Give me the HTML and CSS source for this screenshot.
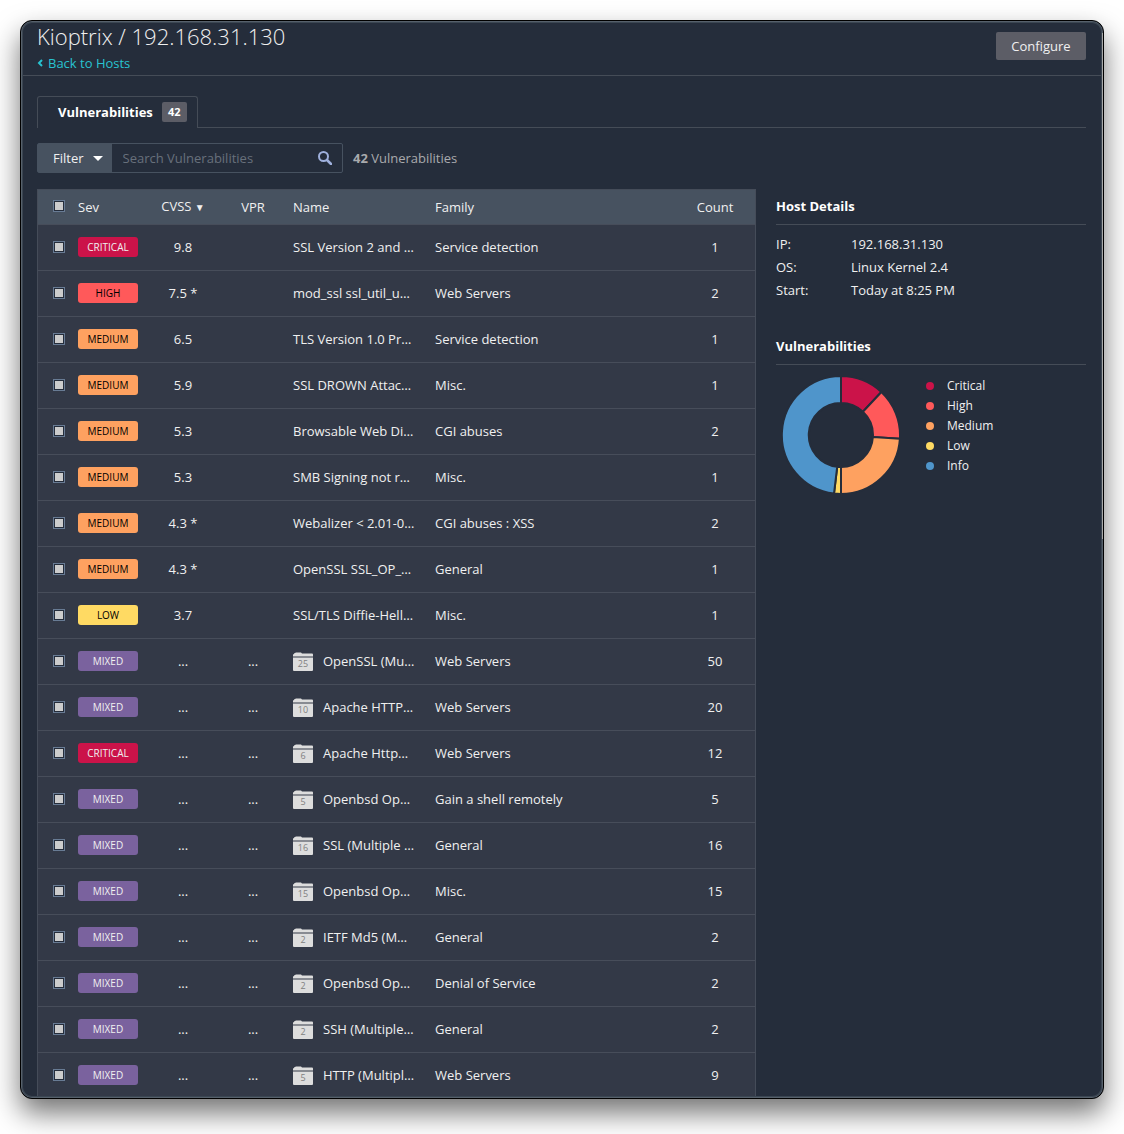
FILE: index.html
```html
<!DOCTYPE html>
<html lang="en">
<head>
<meta charset="utf-8">
<meta name="viewport" content="width=device-width, initial-scale=1">
<title>Kioptrix / 192.168.31.130</title>
<link rel="stylesheet" href="styles.css">
</head>
<body>
<svg class="defs" width="0" height="0" aria-hidden="true">
  <symbol id="folder" viewBox="0 0 20 20">
    <path fill="#ddd" d="M0 4.500V3q0-1 1-1V1.500L3 .5h5l1 1h10q1 0 1 1v2zM0 5.500h20V18q0 1-1 1H1q-1 0-1-1z"/>
  </symbol>
</svg>
<div class="window">
  <header class="header">
    <div>
      <h1 class="title">Kioptrix / 192.168.31.130</h1>
      <a class="back" href="#"><svg width="6" height="8" viewBox="0 0 6 8" aria-hidden="true"><path d="M5 1 2 4l3 3" fill="none" stroke="currentColor" stroke-width="2"/></svg>Back to Hosts</a>
    </div>
    <button class="configure" type="button">Configure</button>
  </header>
  <main class="content">
    <nav class="tabs">
      <a class="tab" href="#">Vulnerabilities <span class="tab-count">42</span></a>
    </nav>
    <div class="toolbar">
      <div class="search">
        <button class="filter" type="button">Filter <span class="caret"></span></button>
        <input class="search-input" type="text" placeholder="Search Vulnerabilities" aria-label="Search Vulnerabilities">
        <svg class="search-icon" width="14" height="14" viewBox="0 0 14 14" aria-hidden="true"><circle cx="5.500" cy="5.500" r="4.500" fill="none" stroke="#9fb0dc" stroke-width="2"/><path d="m9 9 4 4" stroke="#9fb0dc" stroke-width="2.500" stroke-linecap="round"/></svg>
      </div>
      <div class="total"><b>42</b> Vulnerabilities</div>
    </div>
    <div class="columns">
      <table class="vulns">
        <colgroup><col class="c-check"><col class="c-sev"><col class="c-cvss"><col class="c-vpr"><col class="c-name"><col><col class="c-count"></colgroup>
        <thead>
          <tr><th><input class="check" type="checkbox" aria-label="Select all"></th><th>Sev</th><th class="mid sorted">CVSS <span class="sort">▼</span></th><th class="mid">VPR</th><th>Name</th><th>Family</th><th class="mid">Count</th></tr>
        </thead>
        <tbody>
          <tr><td><input class="check" type="checkbox" aria-label="Select row"></td><td><span class="sev critical">CRITICAL</span></td><td class="mid">9.8</td><td class="mid"></td><td>SSL Version 2 and …</td><td>Service detection</td><td class="mid">1</td></tr>
          <tr><td><input class="check" type="checkbox" aria-label="Select row"></td><td><span class="sev high">HIGH</span></td><td class="mid">7.5 *</td><td class="mid"></td><td>mod_ssl ssl_util_u…</td><td>Web Servers</td><td class="mid">2</td></tr>
          <tr><td><input class="check" type="checkbox" aria-label="Select row"></td><td><span class="sev medium">MEDIUM</span></td><td class="mid">6.5</td><td class="mid"></td><td>TLS Version 1.0 Pr…</td><td>Service detection</td><td class="mid">1</td></tr>
          <tr><td><input class="check" type="checkbox" aria-label="Select row"></td><td><span class="sev medium">MEDIUM</span></td><td class="mid">5.9</td><td class="mid"></td><td>SSL DROWN Attac…</td><td>Misc.</td><td class="mid">1</td></tr>
          <tr><td><input class="check" type="checkbox" aria-label="Select row"></td><td><span class="sev medium">MEDIUM</span></td><td class="mid">5.3</td><td class="mid"></td><td>Browsable Web Di…</td><td>CGI abuses</td><td class="mid">2</td></tr>
          <tr><td><input class="check" type="checkbox" aria-label="Select row"></td><td><span class="sev medium">MEDIUM</span></td><td class="mid">5.3</td><td class="mid"></td><td>SMB Signing not r…</td><td>Misc.</td><td class="mid">1</td></tr>
          <tr><td><input class="check" type="checkbox" aria-label="Select row"></td><td><span class="sev medium">MEDIUM</span></td><td class="mid">4.3 *</td><td class="mid"></td><td>Webalizer &lt; 2.01-0…</td><td>CGI abuses : XSS</td><td class="mid">2</td></tr>
          <tr><td><input class="check" type="checkbox" aria-label="Select row"></td><td><span class="sev medium">MEDIUM</span></td><td class="mid">4.3 *</td><td class="mid"></td><td>OpenSSL SSL_OP_…</td><td>General</td><td class="mid">1</td></tr>
          <tr><td><input class="check" type="checkbox" aria-label="Select row"></td><td><span class="sev low">LOW</span></td><td class="mid">3.7</td><td class="mid"></td><td>SSL/TLS Diffie-Hell…</td><td>Misc.</td><td class="mid">1</td></tr>
          <tr><td><input class="check" type="checkbox" aria-label="Select row"></td><td><span class="sev mixed">MIXED</span></td><td class="mid">...</td><td class="mid">...</td><td><div class="group"><span class="folder"><svg width="20" height="20" aria-hidden="true"><use href="#folder"/></svg><span class="folder-num">25</span></span>OpenSSL (Mu…</div></td><td>Web Servers</td><td class="mid">50</td></tr>
          <tr><td><input class="check" type="checkbox" aria-label="Select row"></td><td><span class="sev mixed">MIXED</span></td><td class="mid">...</td><td class="mid">...</td><td><div class="group"><span class="folder"><svg width="20" height="20" aria-hidden="true"><use href="#folder"/></svg><span class="folder-num">10</span></span>Apache HTTP…</div></td><td>Web Servers</td><td class="mid">20</td></tr>
          <tr><td><input class="check" type="checkbox" aria-label="Select row"></td><td><span class="sev critical">CRITICAL</span></td><td class="mid">...</td><td class="mid">...</td><td><div class="group"><span class="folder"><svg width="20" height="20" aria-hidden="true"><use href="#folder"/></svg><span class="folder-num">6</span></span>Apache Http…</div></td><td>Web Servers</td><td class="mid">12</td></tr>
          <tr><td><input class="check" type="checkbox" aria-label="Select row"></td><td><span class="sev mixed">MIXED</span></td><td class="mid">...</td><td class="mid">...</td><td><div class="group"><span class="folder"><svg width="20" height="20" aria-hidden="true"><use href="#folder"/></svg><span class="folder-num">5</span></span>Openbsd Op…</div></td><td>Gain a shell remotely</td><td class="mid">5</td></tr>
          <tr><td><input class="check" type="checkbox" aria-label="Select row"></td><td><span class="sev mixed">MIXED</span></td><td class="mid">...</td><td class="mid">...</td><td><div class="group"><span class="folder"><svg width="20" height="20" aria-hidden="true"><use href="#folder"/></svg><span class="folder-num">16</span></span>SSL (Multiple …</div></td><td>General</td><td class="mid">16</td></tr>
          <tr><td><input class="check" type="checkbox" aria-label="Select row"></td><td><span class="sev mixed">MIXED</span></td><td class="mid">...</td><td class="mid">...</td><td><div class="group"><span class="folder"><svg width="20" height="20" aria-hidden="true"><use href="#folder"/></svg><span class="folder-num">15</span></span>Openbsd Op…</div></td><td>Misc.</td><td class="mid">15</td></tr>
          <tr><td><input class="check" type="checkbox" aria-label="Select row"></td><td><span class="sev mixed">MIXED</span></td><td class="mid">...</td><td class="mid">...</td><td><div class="group"><span class="folder"><svg width="20" height="20" aria-hidden="true"><use href="#folder"/></svg><span class="folder-num">2</span></span>IETF Md5 (M…</div></td><td>General</td><td class="mid">2</td></tr>
          <tr><td><input class="check" type="checkbox" aria-label="Select row"></td><td><span class="sev mixed">MIXED</span></td><td class="mid">...</td><td class="mid">...</td><td><div class="group"><span class="folder"><svg width="20" height="20" aria-hidden="true"><use href="#folder"/></svg><span class="folder-num">2</span></span>Openbsd Op…</div></td><td>Denial of Service</td><td class="mid">2</td></tr>
          <tr><td><input class="check" type="checkbox" aria-label="Select row"></td><td><span class="sev mixed">MIXED</span></td><td class="mid">...</td><td class="mid">...</td><td><div class="group"><span class="folder"><svg width="20" height="20" aria-hidden="true"><use href="#folder"/></svg><span class="folder-num">2</span></span>SSH (Multiple…</div></td><td>General</td><td class="mid">2</td></tr>
          <tr><td><input class="check" type="checkbox" aria-label="Select row"></td><td><span class="sev mixed">MIXED</span></td><td class="mid">...</td><td class="mid">...</td><td><div class="group"><span class="folder"><svg width="20" height="20" aria-hidden="true"><use href="#folder"/></svg><span class="folder-num">5</span></span>HTTP (Multipl…</div></td><td>Web Servers</td><td class="mid">9</td></tr>
        </tbody>
      </table>
      <aside class="side">
        <h2 class="side-title">Host Details</h2>
        <dl class="details">
          <dt>IP:</dt><dd>192.168.31.130</dd>
          <dt>OS:</dt><dd>Linux Kernel 2.4</dd>
          <dt>Start:</dt><dd>Today at 8:25 PM</dd>
        </dl>
        <h2 class="side-title">Vulnerabilities</h2>
        <div class="chart">
          <svg width="118" height="118" viewBox="-59 -59 118 118" role="img" aria-label="Vulnerabilities by severity">
            <g stroke="#252d3b" stroke-width="2">
              <path fill="#cb1349" d="M0-59A59 59 0 0 1 40.400-43L21.900-23.300A32 32 0 0 0 0-32z"/>
              <path fill="#ff595a" d="M40.400-43A59 59 0 0 1 58.900 3.700L31.900 2A32 32 0 0 0 21.900-23.300z"/>
              <path fill="#fea160" d="M58.900 3.700A59 59 0 0 1 0 59V32A32 32 0 0 0 31.900 2z"/>
              <path fill="#ffda63" d="M0 59A59 59 0 0 1-7 58.600L-3.800 31.800A32 32 0 0 0 0 32z"/>
              <path fill="#4f95cb" d="M-7 58.600A59 59 0 0 1 0-59V-32A32 32 0 0 0-3.800 31.800z"/>
            </g>
          </svg>
          <ul class="legend">
            <li><span class="dot critical"></span>Critical</li>
            <li><span class="dot high"></span>High</li>
            <li><span class="dot medium"></span>Medium</li>
            <li><span class="dot low"></span>Low</li>
            <li><span class="dot info"></span>Info</li>
          </ul>
        </div>
      </aside>
    </div>
  </main>
  <div class="scroll-thumb"></div>
</div>
</body>
</html>
```
FILE: styles.css
```css
* { box-sizing: border-box; }

body {
  margin: 0;
  padding: 20px 20px 35px;
  height: 100vh;
  overflow: hidden;
  background: #fff;
  color: #f0f0f0;
  font: 13px/20px "Open Sans", sans-serif;
}

button, input { font: inherit; color: inherit; margin: 0; }
h1, h2, dl, dd, ul { margin: 0; padding: 0; }
a { color: inherit; text-decoration: none; }
.defs { position: absolute; }

.window {
  position: relative;
  height: 100%;
  overflow: hidden;
  border: 1px solid #000;
  border-radius: 12px;
  background: #252d3b;
  box-shadow: 0 14px 28px rgba(0, 0, 0, 0.55);
}

/* rim light, drawn above the scrolled content */
.window::after {
  content: "";
  position: absolute;
  inset: 0;
  border: 1px solid #56606b;
  border-radius: 11px;
  box-shadow: inset 0 0 0 1px #3b4652;
  pointer-events: none;
}

.scroll-thumb {
  position: absolute;
  z-index: 1;
  top: 12px;
  right: 0;
  width: 1px;
  height: 47%;
  background: #aaa;
}

.header {
  display: flex;
  justify-content: space-between;
  align-items: flex-start;
  height: 55px;
  padding: 0 17px 0 16px;
  border-bottom: 1px solid #454c57;
}
.title { margin-bottom: 2px; font-size: 22px; line-height: 30px; font-weight: 300; }
.back { display: flex; align-items: center; gap: 5px; color: #28c3d1; }
.configure {
  min-width: 90px;
  height: 28px;
  margin-top: 11px;
  padding: 0 15px;
  border: 0;
  border-radius: 2px;
  background: #5c5d66;
}

.content { padding: 20px 17px 0 16px; }

.tabs { display: flex; border-bottom: 1px solid #454c57; }
.tab {
  display: flex;
  align-items: center;
  gap: 9px;
  height: 32px;
  margin-bottom: -1px;
  padding: 0 10px 1px 20px;
  border: 1px solid #454c57;
  border-bottom: 0;
  border-radius: 3px 3px 0 0;
  background: #252d3b;
  color: #fff;
  font-weight: 700;
}
.tab-count {
  min-width: 25px;
  border-radius: 2px;
  background: #5c5d66;
  font-size: 11px;
  text-align: center;
}

.toolbar { display: flex; align-items: center; gap: 10px; margin: 15px 0 16px; }
.search {
  display: flex;
  align-items: center;
  width: 306px;
  height: 30px;
  padding-right: 10px;
  border: 1px solid #475260;
  border-radius: 2px;
}
.filter {
  display: flex;
  align-items: center;
  gap: 9px;
  height: 28px;
  padding: 0 9px 0 15px;
  border: 0;
  background: #475260;
}
.caret { border: 5px solid transparent; border-top-color: #fff; border-bottom: 0; }
.search-input {
  flex: 1;
  min-width: 0;
  padding: 0 11px;
  border: 0;
  outline: 0;
  background: none;
}
.search-input::placeholder { color: #68707b; opacity: 1; }
.total { color: #a9aaad; }

.columns {
  display: grid;
  grid-template-columns: minmax(0, 1fr) 310px;
  gap: 20px;
  align-items: start;
}

.vulns {
  width: 100%;
  table-layout: fixed;
  border-spacing: 0;
  border: 1px solid #454c59;
  background: #333947;
}
.c-check { width: 30px; }
.c-sev { width: 75px; }
.c-cvss { width: 80px; }
.c-vpr { width: 60px; }
.c-name { width: 142px; }
.c-count { width: 80px; }
th, td {
  padding: 0 10px;
  border-bottom: 1px solid #474d5a;
  text-align: left;
  font-weight: 400;
  white-space: nowrap;
}
th { height: 35px; background: #475260; }
td { height: 46px; padding-bottom: 2px; }
th:first-child, td:first-child { padding: 0 0 2px 15px; }
.mid { padding-left: 0; padding-right: 0; text-align: center; }
.sorted { padding-bottom: 2px; }
.sort { font-size: 10px; }

.check {
  appearance: none;
  display: block;
  width: 12px;
  height: 12px;
  border: 1px solid #687b94;
  background: #ccc;
  box-shadow: inset 0 0 0 1px #252d3b;
}

.sev {
  display: block;
  width: 60px;
  border-radius: 3px;
  font-size: 10px;
  text-align: center;
}
.critical { background: #cb1349; }
.high { background: #ff595a; }
.medium { background: #fea160; }
.low { background: #ffda63; }
.mixed { background: #7a629e; }
.info { background: #4f95cb; }
.sev.high, .sev.medium, .sev.low { color: #000; }

.group { display: flex; align-items: center; gap: 10px; height: 20px; }
.folder { display: grid; place-items: center; padding-top: 3px; }
.folder > * { grid-area: 1 / 1; }
.folder-num { padding-top: 4px; color: #808080; font-size: 9px; line-height: 16px; }

.side-title {
  padding: 7px 0;
  border-bottom: 1px solid #454c57;
  color: #fff;
  font-size: 13px;
  line-height: 21px;
}
.details {
  display: grid;
  grid-template-columns: 75px 1fr;
  padding: 8px 0 27px;
  line-height: 23px;
}
.chart { display: flex; gap: 26px; padding: 11px 0 0 6px; }
.legend { list-style: none; font-size: 12px; }
.legend li { display: flex; align-items: center; gap: 13px; }
.dot { width: 8px; height: 8px; border-radius: 50%; }
```
